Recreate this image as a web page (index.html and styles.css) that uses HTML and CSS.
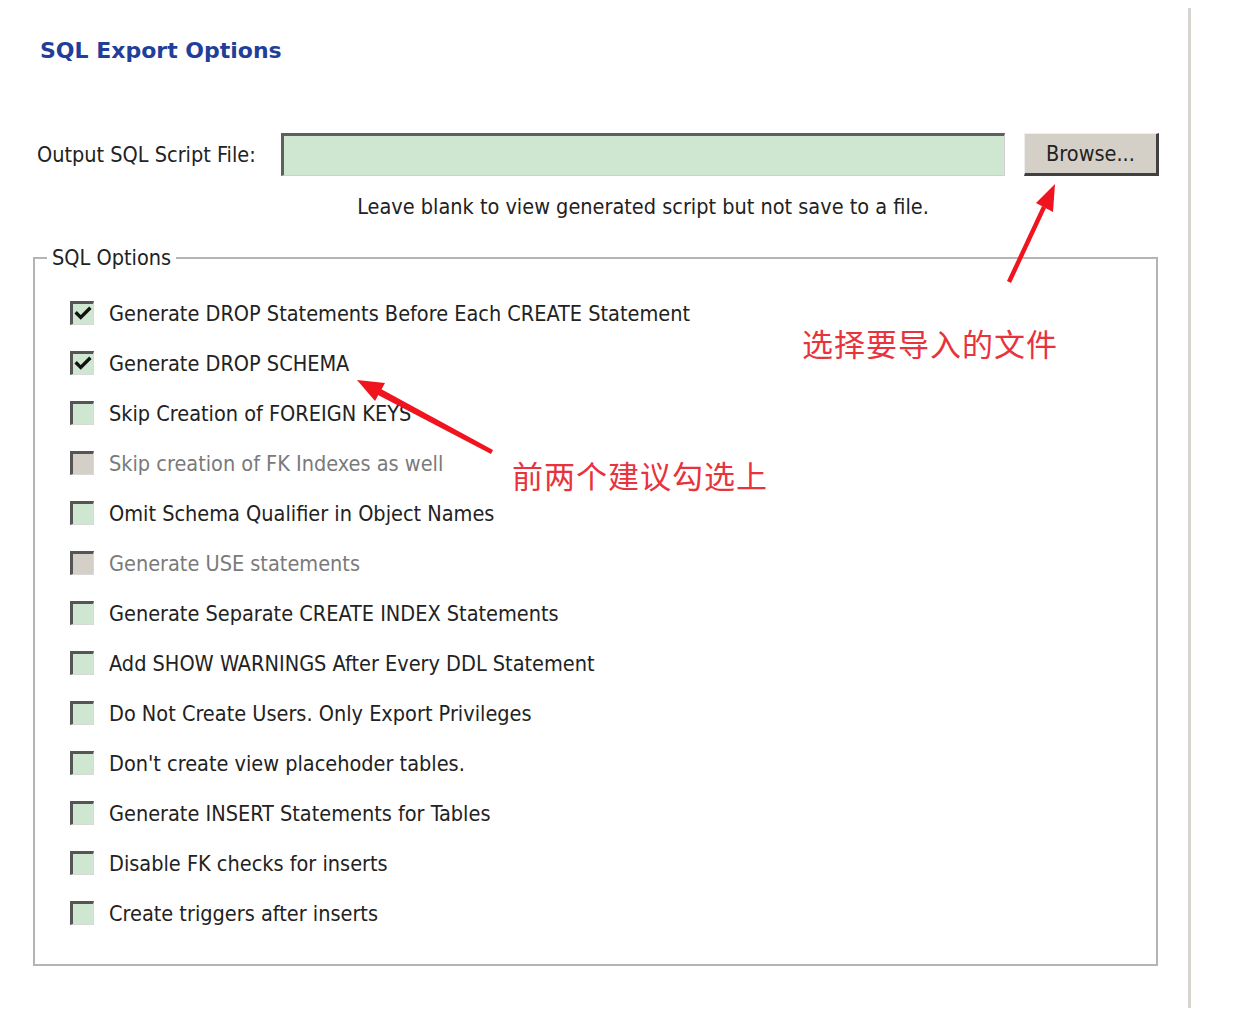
FILE: index.html
```html
<!DOCTYPE html>
<html>
<head>
  <title>SQL Export Options</title>
  <link rel="stylesheet" href="styles.css">
</head>
<body>
  <div class="page">
    <div class="panel">
      <h1 class="title">SQL Export Options</h1>

      <div class="file-row">
        <label class="file-label" for="outfile">Output SQL Script File:</label>
        <input id="outfile" class="file-input" type="text">
        <button class="browse">Browse...</button>
      </div>
      <p class="hint">Leave blank to view generated script but not save to a file.</p>

      <fieldset class="options">
        <legend>SQL Options</legend>
        <div class="opt"><span class="box"><svg viewBox="0 0 16 16"><polyline points="2.5,7.5 6,11 13.5,3.5"/></svg></span>Generate DROP Statements Before Each CREATE Statement</div>
        <div class="opt"><span class="box"><svg viewBox="0 0 16 16"><polyline points="2.5,7.5 6,11 13.5,3.5"/></svg></span>Generate DROP SCHEMA</div>
        <div class="opt"><span class="box"></span>Skip Creation of FOREIGN KEYS</div>
        <div class="opt disabled"><span class="box"></span>Skip creation of FK Indexes as well</div>
        <div class="opt"><span class="box"></span>Omit Schema Qualifier in Object Names</div>
        <div class="opt disabled"><span class="box"></span>Generate USE statements</div>
        <div class="opt"><span class="box"></span>Generate Separate CREATE INDEX Statements</div>
        <div class="opt"><span class="box"></span>Add SHOW WARNINGS After Every DDL Statement</div>
        <div class="opt"><span class="box"></span>Do Not Create Users. Only Export Privileges</div>
        <div class="opt"><span class="box"></span>Don't create view placehoder tables.</div>
        <div class="opt"><span class="box"></span>Generate INSERT Statements for Tables</div>
        <div class="opt"><span class="box"></span>Disable FK checks for inserts</div>
        <div class="opt"><span class="box"></span>Create triggers after inserts</div>
      </fieldset>
    </div>

    <!-- red annotations pasted over the screenshot -->
    <div class="note note-file">选择要导入的文件</div>
    <div class="note note-check">前两个建议勾选上</div>
    <svg class="arrows" width="1242" height="1028" viewBox="0 0 1242 1028">
      <polygon points="1007,281 1011,283 1046,208 1042,206" />
      <polygon points="1055,184 1036,203 1053,212" />
      <polygon points="491,454 493,450 381,389 378,395" />
      <polygon points="357,380 385,383 375,401" />
    </svg>
  </div>
</body>
</html>
```

FILE: styles.css
```css
* {
  margin: 0;
  padding: 0;
  box-sizing: border-box;
}

body {
  background: #fff;
  font-family: "DejaVu Sans Condensed", "DejaVu Sans", sans-serif;
  color: #222;
}

.page {
  position: relative;
  width: 1242px;
  height: 1028px;
  padding-top: 8px;
}

.panel {
  width: 1191px;
  height: 1000px;
  border-right: 3px solid #d8d4d0;
  padding: 26px 0 0 33px;
}

.title {
  font-family: "DejaVu Sans", sans-serif;
  font-size: 22px;
  font-weight: bold;
  color: #1f3f9a;
  margin-left: 7px;
  height: 34px;
  line-height: 34px;
}

.file-row {
  display: flex;
  align-items: center;
  margin-top: 65px;
  height: 43px;
}

.file-label {
  font-size: 21.5px;
  width: 248px;
  padding-left: 4px;
}

.file-input {
  width: 724px;
  height: 43px;
  background: #cfe6d0;
  border-style: solid;
  border-width: 3px 1px 1px 3px;
  border-color: #5f5f5f #d0d0d0 #d0d0d0 #5f5f5f;
  outline: none;
}

.browse {
  margin-left: 19px;
  width: 135px;
  height: 43px;
  background: #d4d0c8;
  border-style: solid;
  border-width: 1px 3px 3px 1px;
  border-color: #eeeeee #404040 #404040 #eeeeee;
  font-family: "DejaVu Sans Condensed", "DejaVu Sans", sans-serif;
  font-size: 21.5px;
  color: #222;
}

.hint {
  margin-left: 248px;
  width: 724px;
  text-align: center;
  font-size: 21.5px;
  margin-top: 17px;
  line-height: 28px;
}

.options {
  margin-top: 24px;
  width: 1125px;
  height: 721px;
  border: 2px solid #b4b4b4;
  padding: 17px 0 0 0;
}

.options legend {
  margin-left: 12px;
  padding: 0 5px;
  font-size: 21.5px;
  line-height: 26px;
}

.opt {
  display: flex;
  align-items: center;
  gap: 15px;
  height: 50px;
  padding-left: 35px;
  font-size: 21.5px;
}

.opt.disabled {
  color: #7a7a7a;
}

.box {
  width: 24px;
  height: 24px;
  flex: none;
  background: #cfe6d0;
  border-style: solid;
  border-width: 3px 1px 1px 3px;
  border-color: #555 #d8d8d8 #d8d8d8 #555;
  display: flex;
  align-items: center;
  justify-content: center;
}

.opt.disabled .box {
  background: #d4d0c8;
}

.box svg {
  width: 18px;
  height: 18px;
  fill: none;
  stroke: #111;
  stroke-width: 3;
  stroke-linecap: square;
}

.note {
  position: absolute;
  font-family: "Noto Sans CJK SC", sans-serif;
  font-size: 31px;
  color: #e8323c;
  line-height: 40px;
  letter-spacing: 1px;
}

.note-file {
  left: 802px;
  top: 323px;
}

.note-check {
  left: 512px;
  top: 455px;
}

.arrows {
  position: absolute;
  left: 0;
  top: 0;
  fill: #f0141e;
}
```
